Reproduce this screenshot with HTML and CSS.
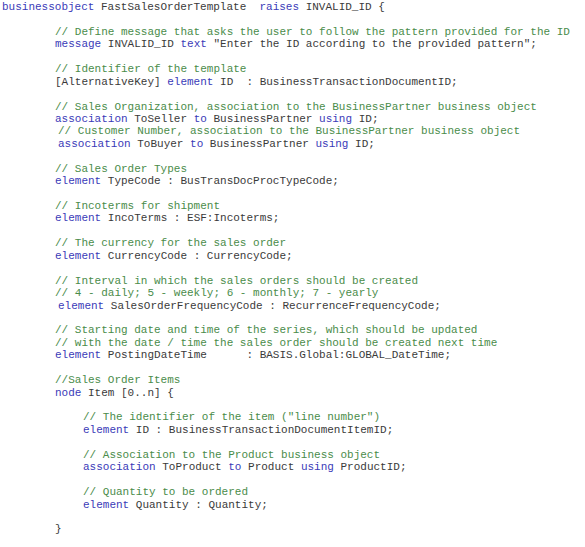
FILE: index.html
```html
<!DOCTYPE html>
<html>
<head>
<meta charset="utf-8">
<link rel="stylesheet" href="styles.css">
</head>
<body>
<div class="code">
<div class="ln"><span class="kw">businessobject</span> FastSalesOrderTemplate  <span class="kw">raises</span> INVALID_ID {</div>
<div class="ln blank"></div>
<div class="ln in1"><span class="cm">// Define message that asks the user to follow the pattern provided for the ID</span></div>
<div class="ln in1"><span class="kw">message</span> INVALID_ID <span class="kw">text</span> "Enter the ID according to the provided pattern";</div>
<div class="ln blank"></div>
<div class="ln in1"><span class="cm">// Identifier of the template</span></div>
<div class="ln in1">[AlternativeKey] <span class="kw">element</span> ID  : BusinessTransactionDocumentID;</div>
<div class="ln blank"></div>
<div class="ln in1"><span class="cm">// Sales Organization, association to the BusinessPartner business object</span></div>
<div class="ln in1"><span class="kw">association</span> ToSeller <span class="kw">to</span> BusinessPartner <span class="kw">using</span> ID;</div>
<div class="ln in1 shift"><span class="cm">// Customer Number, association to the BusinessPartner business object</span></div>
<div class="ln in1 shift"><span class="kw">association</span> ToBuyer <span class="kw">to</span> BusinessPartner <span class="kw">using</span> ID;</div>
<div class="ln blank"></div>
<div class="ln in1"><span class="cm">// Sales Order Types</span></div>
<div class="ln in1"><span class="kw">element</span> TypeCode : BusTransDocProcTypeCode;</div>
<div class="ln blank"></div>
<div class="ln in1"><span class="cm">// Incoterms for shipment</span></div>
<div class="ln in1"><span class="kw">element</span> IncoTerms : ESF:Incoterms;</div>
<div class="ln blank"></div>
<div class="ln in1"><span class="cm">// The currency for the sales order</span></div>
<div class="ln in1"><span class="kw">element</span> CurrencyCode : CurrencyCode;</div>
<div class="ln blank"></div>
<div class="ln in1"><span class="cm">// Interval in which the sales orders should be created</span></div>
<div class="ln in1"><span class="cm">// 4 - daily; 5 - weekly; 6 - monthly; 7 - yearly</span></div>
<div class="ln in1 shift"><span class="kw">element</span> SalesOrderFrequencyCode : RecurrenceFrequencyCode;</div>
<div class="ln blank"></div>
<div class="ln in1"><span class="cm">// Starting date and time of the series, which should be updated</span></div>
<div class="ln in1"><span class="cm">// with the date / time the sales order should be created next time</span></div>
<div class="ln in1"><span class="kw">element</span> PostingDateTime      : BASIS.Global:GLOBAL_DateTime;</div>
<div class="ln blank"></div>
<div class="ln in1"><span class="cm">//Sales Order Items</span></div>
<div class="ln in1"><span class="kw">node</span> Item [0..n] {</div>
<div class="ln blank"></div>
<div class="ln in2"><span class="cm">// The identifier of the item ("line number")</span></div>
<div class="ln in2"><span class="kw">element</span> ID : BusinessTransactionDocumentItemID;</div>
<div class="ln blank"></div>
<div class="ln in2"><span class="cm">// Association to the Product business object</span></div>
<div class="ln in2"><span class="kw">association</span> ToProduct <span class="kw">to</span> Product <span class="kw">using</span> ProductID;</div>
<div class="ln blank"></div>
<div class="ln in2"><span class="cm">// Quantity to be ordered</span></div>
<div class="ln in2"><span class="kw">element</span> Quantity : Quantity;</div>
<div class="ln blank"></div>
<div class="ln in1">}</div>
</div>
</body>
</html>
```
FILE: styles.css
```css
html, body {
  margin: 0;
  padding: 0;
  background: #ffffff;
}

.code {
  padding: 1px 0 0 2px;
  font-family: "Liberation Mono", "Courier New", monospace;
  font-size: 11px;
  line-height: 12.45px;
  color: #3a3a3a;
}

.ln {
  white-space: pre;
  height: 12.45px;
}

.in1 {
  padding-left: 53px;
}

.in1.shift {
  padding-left: 56px;
}

.in2 {
  padding-left: 81px;
}

.kw {
  color: #3a3ab8;
}

.cm {
  color: #4a8c4a;
}
```
